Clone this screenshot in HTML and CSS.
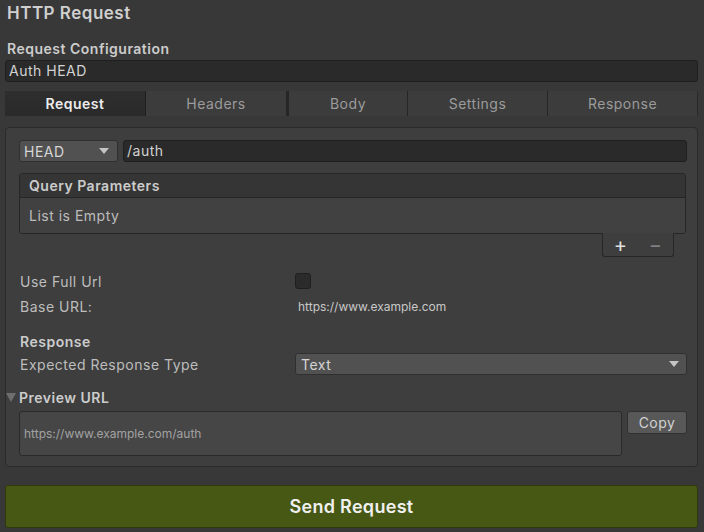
FILE: index.html
```html
<!DOCTYPE html>
<html lang="en">
<head>
    <meta charset="UTF-8">
    <meta name="viewport" content="width=device-width, initial-scale=1.0">
    <title>HTTP Request</title>
    <link rel="stylesheet" href="styles.css">
</head>
<body>
    <h1 class="title">HTTP Request</h1>

    <h2 class="section-label">Request Configuration</h2>
    <div class="text-field name-field">Auth HEAD</div>

    <nav class="tabs">
        <div class="tab tab-active" style="flex-basis: 141px">Request</div>
        <div class="tab" style="flex-basis: 141px">Headers</div>
        <div class="tab tab-double" style="flex-basis: 121px">Body</div>
        <div class="tab" style="flex-basis: 140px">Settings</div>
        <div class="tab tab-last" style="flex-basis: 150px">Response</div>
    </nav>

    <main class="panel">
        <div class="url-row">
            <div class="dropdown method">
                <span>HEAD</span>
                <span class="arrow"></span>
            </div>
            <div class="text-field path">/auth</div>
        </div>

        <!-- query params list -->
        <div class="list">
            <div class="list-header">Query Parameters</div>
            <div class="list-body">List is Empty</div>
        </div>
        <div class="list-footer-row">
            <div class="list-footer">
                <span class="plus">+</span>
                <span class="minus">&minus;</span>
            </div>
        </div>

        <div class="field-row row-full">
            <label class="field-label">Use Full Url</label>
            <span class="checkbox"></span>
        </div>
        <div class="field-row row-base">
            <label class="field-label">Base URL:</label>
            <span class="field-value">https://www.example.com</span>
        </div>

        <div class="group-label">Response</div>
        <div class="field-row row-type">
            <label class="field-label">Expected Response Type</label>
            <div class="dropdown type">
                <span>Text</span>
                <span class="arrow"></span>
            </div>
        </div>

        <div class="foldout">
            <span class="fold-arrow"></span>
            <span>Preview URL</span>
        </div>
        <div class="preview-row">
            <div class="preview-box">https://www.example.com/auth</div>
            <button class="copy-btn">Copy</button>
        </div>
    </main>

    <button class="send-btn">Send Request</button>
</body>
</html>
```

FILE: styles.css
```css
body {
    font-family: Inter, "Noto Sans", sans-serif;
    font-size: 14px;
    letter-spacing: 0.5px;
    margin: 0;
    padding: 0;
    background-color: #383838;
    color: #c4c4c4;
    width: 704px;
    height: 532px;
    overflow: hidden;
}

.title {
    margin: 0;
    padding: 3px 7px 0;
    height: 22px;
    font-size: 17px;
    font-weight: 600;
    color: #cfcfcf;
}

.section-label {
    margin: 15px 0 0;
    padding: 0 7px;
    height: 20px;
    font-size: 14px;
    font-weight: 600;
    color: #cccccc;
}

.text-field {
    background-color: #2a2a2a;
    border: 1px solid #1f1f1f;
    border-radius: 3px;
    box-sizing: border-box;
    height: 22px;
    line-height: 20px;
    padding: 0 3px;
    color: #d2d2d2;
}

.name-field {
    margin: 0 6px 0 5px;
}

.tabs {
    display: flex;
    margin: 9px 6px 0 5px;
    height: 25px;
    background-color: #3c3c3c;
}

.tab {
    flex-grow: 0;
    flex-shrink: 0;
    box-sizing: border-box;
    text-align: center;
    line-height: 25px;
    color: #9b9b9b;
    border-right: 1px solid #262626;
}

.tab-active {
    background: linear-gradient(#2e2e2e, #2a2a2a);
    color: #ececec;
    font-weight: 600;
    border-right: 1px solid #1f1f1f;
}

.tab-double {
    border-left: 2px solid #262626;
}

.tab-last {
    border-right: 1px solid #2a2a2a;
}

.panel {
    margin: 11px 6px 0 5px;
    height: 340px;
    box-sizing: border-box;
    background-color: #3e3e3e;
    border: 1px solid #2a2a2a;
    border-radius: 4px;
    padding: 12px 10px 0 13px;
}

.url-row {
    display: flex;
    gap: 5px;
    height: 22px;
}

.dropdown {
    display: flex;
    align-items: center;
    justify-content: space-between;
    box-sizing: border-box;
    height: 22px;
    padding: 0 8px 0 4px;
    background-color: #515151;
    border: 1px solid #303030;
    border-radius: 3px;
    color: #d6d6d6;
}

.arrow {
    width: 0;
    height: 0;
    border-left: 5px solid transparent;
    border-right: 5px solid transparent;
    border-top: 6px solid #c4c4c4;
}

.method {
    width: 99px;
    flex-shrink: 0;
}

.path {
    flex-grow: 1;
}

.list {
    margin: 11px 1px 0 0;
    border: 1px solid #262626;
    border-radius: 3px;
    overflow: hidden;
}

.list-header {
    height: 23px;
    line-height: 24px;
    padding-left: 9px;
    background-color: #353535;
    border-bottom: 1px solid #262626;
    font-weight: 600;
    color: #cccccc;
}

.list-body {
    height: 35px;
    line-height: 36px;
    padding-left: 9px;
    background-color: #414141;
    color: #bdbdbd;
}

.list-footer-row {
    display: flex;
    justify-content: flex-end;
    padding-right: 13px;
}

.list-footer {
    display: flex;
    justify-content: space-around;
    align-items: center;
    width: 70px;
    height: 23px;
    margin-top: -1px;
    background-color: #3e3e3e;
    border: 1px solid #262626;
    border-top: none;
    border-radius: 0 0 3px 3px;
}

.plus {
    font-size: 20px;
    color: #e0e0e0;
    line-height: 20px;
}

.minus {
    font-size: 20px;
    color: #808080;
    line-height: 20px;
}

.field-row {
    display: flex;
    align-items: center;
    padding-left: 1px;
}

.field-label {
    width: 275px;
    flex-shrink: 0;
    color: #bdbdbd;
}

.row-full {
    margin-top: 14px;
    height: 20px;
}

.checkbox {
    width: 16px;
    height: 16px;
    box-sizing: border-box;
    background-color: #2b2b2b;
    border: 1px solid #1f1f1f;
    border-radius: 3px;
}

.row-base {
    margin-top: 5px;
    height: 20px;
}

.field-value {
    font-size: 12px;
    letter-spacing: 0;
    color: #c8c8c8;
    padding-left: 3px;
}

.group-label {
    margin-top: 17px;
    padding-left: 1px;
    height: 18px;
    line-height: 18px;
    font-weight: 600;
    color: #cccccc;
}

.row-type {
    margin-top: 2px;
    height: 22px;
}

.type {
    flex-grow: 1;
    padding-left: 5px;
    padding-right: 7px;
}

.foldout {
    display: flex;
    align-items: center;
    gap: 3px;
    margin: 12px 0 0 -13px;
    height: 20px;
    font-weight: 600;
    color: #cccccc;
}

.fold-arrow {
    width: 0;
    height: 0;
    border-left: 5px solid transparent;
    border-right: 5px solid transparent;
    border-top: 9px solid #6e6e6e;
}

.preview-row {
    display: flex;
    gap: 5px;
    margin-top: 4px;
}

.preview-box {
    width: 604px;
    height: 45px;
    box-sizing: border-box;
    background-color: #464646;
    border: 1px solid #2a2a2a;
    border-radius: 3px;
    font-size: 12px;
    letter-spacing: 0;
    line-height: 43px;
    padding-left: 4px;
    color: #a2a2a2;
}

.copy-btn {
    width: 60px;
    height: 23px;
    padding: 0;
    font-family: Inter, "Noto Sans", sans-serif;
    font-size: 14px;
    letter-spacing: 0.5px;
    color: #d2d2d2;
    background-color: #585858;
    border: 1px solid #303030;
    border-radius: 3px;
}

.send-btn {
    display: block;
    margin: 18px 6px 0 5px;
    width: 693px;
    height: 43px;
    font-family: Inter, "Noto Sans", sans-serif;
    font-size: 18px;
    font-weight: 600;
    letter-spacing: 0.3px;
    color: #f0f0f0;
    background-color: #475814;
    border: 1px solid #2f3a0c;
    border-radius: 3px;
}
```
